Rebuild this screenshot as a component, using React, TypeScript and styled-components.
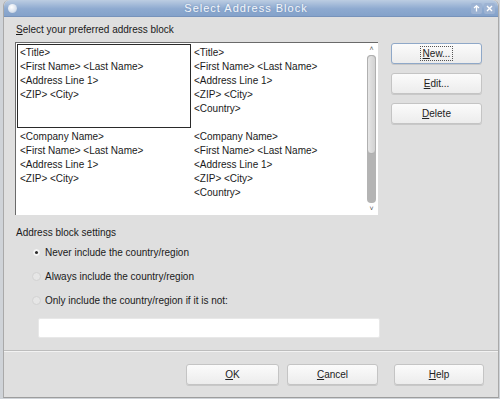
import React from "react"
import styled, { createGlobalStyle } from "styled-components"

const GlobalStyle = createGlobalStyle`
  html, body {
    margin: 0;
    padding: 0;
    background: #cfd3d8;
  }
  body {
    font-family: "Liberation Sans", Arial, sans-serif;
    font-size: 10px;
    color: #1a1a1a;
  }
`

const Window = styled.div`
  width: 494px;
  height: 397px;
  margin: 0 3px;
  background: #dfdfdf;
  border-left: 1px solid #a9a9a9;
  border-right: 1px solid #a9a9a9;
  border-bottom: 1px solid #9d9d9d;
  border-radius: 6px 6px 0 0;
  display: flex;
  flex-direction: column;
  overflow: hidden;
`

const TitleBar = styled.div`
  height: 16px;
  flex: none;
  display: flex;
  align-items: center;
  padding: 0 3px 0 4px;
  background: linear-gradient(#bccde2, #8eaad0 55%, #84a2ca);
  border-bottom: 1px solid #7793bb;
  border-radius: 6px 6px 0 0;
`

const TitleIcon = styled.div`
  width: 9px;
  height: 9px;
  border-radius: 50%;
  background: radial-gradient(circle at 40% 35%, #ffffff, #d9e2ee 60%, #9fb2cc);
`

const Title = styled.div`
  flex: 1;
  text-align: center;
  color: #f4f7fb;
  font-size: 11px;
  letter-spacing: 1px;
  text-shadow: 0 0 2px #6f8db6;
  padding-left: 6px;
`

const TitleButton = styled.div`
  width: 11px;
  height: 11px;
  margin-left: 2px;
  border-radius: 2px;
  background: #9db3d3;
  display: flex;
  align-items: center;
  justify-content: center;
`

const Body = styled.div`
  flex: 1;
  padding: 6px 0 0 11px;
  display: flex;
  flex-direction: column;
`

const SectionLabel = styled.div`
  line-height: 14px;
  margin-bottom: 5px;
  padding-left: 1px;
`

const TopRow = styled.div`
  display: flex;
  gap: 13px;
`

const ListBox = styled.div`
  width: 362px;
  height: 172px;
  background: #ffffff;
  border-top: 1px solid #6a6a6a;
  border-left: 1px solid #6a6a6a;
  display: flex;
`

const Grid = styled.div`
  flex: 1;
  padding: 1px 0 0 1px;
  display: grid;
  grid-template-columns: 174px 174px;
  grid-auto-rows: 84px;
`

const Cell = styled.div<{ $selected?: boolean }>`
  border: 1px solid ${({ $selected }) => ($selected ? "#2a2a2a" : "transparent")};
  padding: 1px 0 0 2px;
  line-height: 14px;
  white-space: nowrap;
  overflow: hidden;
`

const ScrollBar = styled.div`
  width: 11px;
  margin: 2px 1px 2px 0;
  display: flex;
  flex-direction: column;
  align-items: center;
`

const ScrollArrow = styled.div`
  height: 8px;
  font-size: 7px;
  line-height: 8px;
  color: #555;
`

const ScrollTrack = styled.div`
  flex: 1;
  width: 9px;
  margin: 2px 0;
  border-radius: 4px;
  background: #b4b4b4;
  display: flex;
  flex-direction: column;
`

const ScrollThumb = styled.div`
  height: 97px;
  border-radius: 4px;
  border: 1px solid #b0b0b0;
  background: linear-gradient(90deg, #e6e6e6, #d2d2d2);
`

const SideButtons = styled.div`
  display: flex;
  flex-direction: column;
  gap: 9px;
  padding-top: 1px;
`

const Button = styled.div<{ $default?: boolean; $width?: number; $gapBefore?: number }>`
  width: ${({ $width }) => $width ?? 91}px;
  height: 21px;
  margin-left: ${({ $gapBefore }) => $gapBefore ?? 0}px;
  box-sizing: border-box;
  border-radius: 3px;
  border: 1px solid ${({ $default }) => ($default ? "#8fa8c8" : "#c4c4c4")};
  box-shadow: 0 1px 0 #c8c8c8;
  background: linear-gradient(#fbfbfb, #ececec);
  display: flex;
  align-items: center;
  justify-content: center;
  font-size: 10px;
  color: #222;
`

const FocusText = styled.span`
  outline: 1px dotted #555;
  padding: 1px 2px;
`

const SettingsLabel = styled.div`
  line-height: 14px;
  margin-top: 11px;
  padding-left: 1px;
`

const RadioRow = styled.div`
  height: 24px;
  display: flex;
  align-items: center;
  gap: 4px;
  padding-left: 17px;
`

const Radio = styled.div<{ $checked?: boolean }>`
  width: 7px;
  height: 7px;
  border-radius: 50%;
  background: ${({ $checked }) => ($checked ? "#f4f4f4" : "#e6e6e6")};
  border: 1px solid ${({ $checked }) => ($checked ? "#dcdcdc" : "#d2d2d2")};
  display: flex;
  align-items: center;
  justify-content: center;

  &::after {
    content: "";
    width: 3px;
    height: 3px;
    border-radius: 50%;
    background: ${({ $checked }) => ($checked ? "#2a2a2a" : "transparent")};
  }
`

const TextField = styled.div`
  width: 342px;
  height: 20px;
  margin: 6px 0 0 23px;
  background: #ffffff;
  border: 1px solid #e8e8e8;
  border-radius: 2px;
  box-sizing: border-box;
`

const Separator = styled.div`
  height: 1px;
  flex: none;
  margin-top: 12px;
  background: #bdbdbd;
  border-bottom: 1px solid #f2f2f2;
`

const Footer = styled.div`
  flex: none;
  display: flex;
  justify-content: flex-end;
  gap: 8px;
  padding: 12px 14px 13px 0;
`

const blocks = [
  ["<Title>", "<First Name> <Last Name>", "<Address Line 1>", "<ZIP> <City>"],
  ["<Title>", "<First Name> <Last Name>", "<Address Line 1>", "<ZIP> <City>", "<Country>"],
  ["<Company Name>", "<First Name> <Last Name>", "<Address Line 1>", "<ZIP> <City>"],
  ["<Company Name>", "<First Name> <Last Name>", "<Address Line 1>", "<ZIP> <City>", "<Country>"],
]

const options = [
  "Never include the country/region",
  "Always include the country/region",
  "Only include the country/region if it is not:",
]

const App = () => {
  return (
    <>
      <GlobalStyle />
      <Window>
        <TitleBar>
          <TitleIcon />
          <Title>Select Address Block</Title>
          <TitleButton>
            <svg width="7" height="7" viewBox="0 0 7 7">
              <path d="M3.5 1 L3.5 6.5 M1 3 L3.5 0.8 L6 3" stroke="#fff" strokeWidth="1.3" fill="none" />
            </svg>
          </TitleButton>
          <TitleButton>
            <svg width="7" height="7" viewBox="0 0 7 7">
              <path d="M1 1 L6 6 M6 1 L1 6" stroke="#fff" strokeWidth="1.4" />
            </svg>
          </TitleButton>
        </TitleBar>
        <Body>
          <SectionLabel>
            <u>S</u>elect your preferred address block
          </SectionLabel>
          <TopRow>
            <ListBox>
              <Grid>
                {blocks.map((lines, i) => (
                  <Cell key={i} $selected={i === 0}>
                    {lines.map((l) => (
                      <div key={l}>{l}</div>
                    ))}
                  </Cell>
                ))}
              </Grid>
              <ScrollBar>
                <ScrollArrow>˄</ScrollArrow>
                <ScrollTrack>
                  <ScrollThumb />
                </ScrollTrack>
                <ScrollArrow>˅</ScrollArrow>
              </ScrollBar>
            </ListBox>
            <SideButtons>
              <Button $default>
                <FocusText>
                  <u>N</u>ew...
                </FocusText>
              </Button>
              <Button>
                <span>
                  <u>E</u>dit...
                </span>
              </Button>
              <Button>
                <span>
                  <u>D</u>elete
                </span>
              </Button>
            </SideButtons>
          </TopRow>
          <SettingsLabel>Address block settings</SettingsLabel>
          {options.map((o, i) => (
            <RadioRow key={o}>
              <Radio $checked={i === 0} />
              <span>{o}</span>
            </RadioRow>
          ))}
          <TextField />
        </Body>
        <Separator />
        <Footer>
          <Button $width={93}>
            <span>
              <u>O</u>K
            </span>
          </Button>
          <Button $width={91}>
            <span>
              <u>C</u>ancel
            </span>
          </Button>
          <Button $width={90} $gapBefore={8}>
            <span>
              <u>H</u>elp
            </span>
          </Button>
        </Footer>
      </Window>
    </>
  )
}

export default App
